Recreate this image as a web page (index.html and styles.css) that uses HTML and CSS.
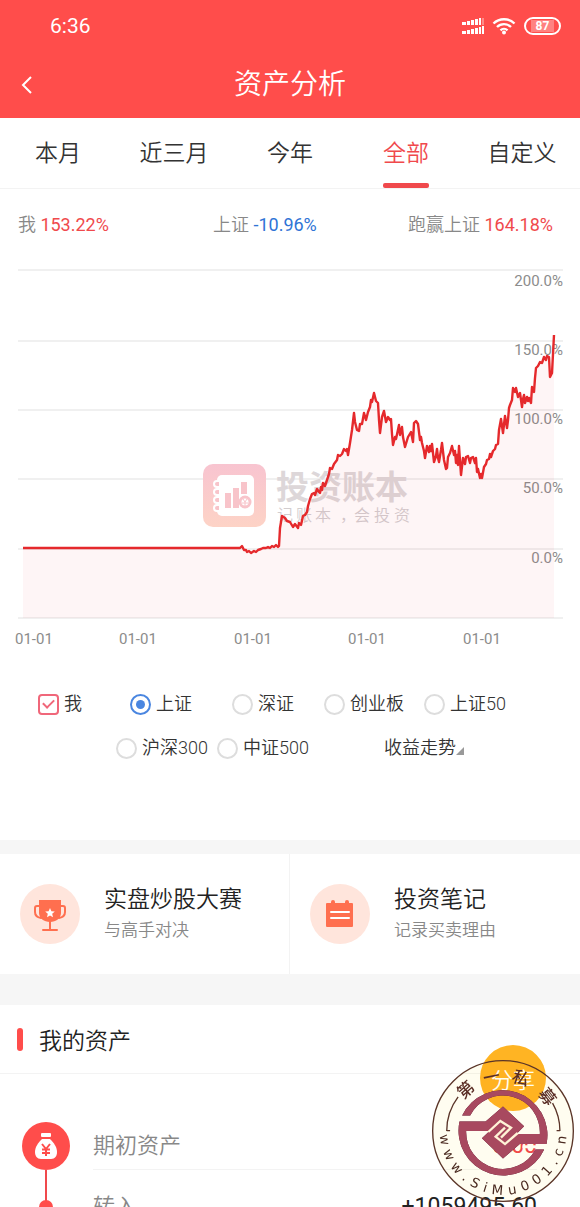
FILE: index.html
```html
<!DOCTYPE html>
<html lang="zh-CN">
<head>
  <meta charset="UTF-8" />
  <meta name="viewport" content="width=device-width, initial-scale=1" />
  <title>资产分析</title>
  <link rel="stylesheet" href="styles.css">
</head>
<body>

<header>
  <div class="status">
    <span class="time">6:36</span>
    <svg class="signal" width="22" height="18" viewBox="0 0 22 18" fill="#fff">
      <path d="M0 5h4v3H0zM5 4h3v4H5zM9 3h3v5H9zM13 2h3v6h-3zM17 1h2v7h-2z" />
      <path d="M20 1h2v7h-2z" opacity=".35" />
      <path d="M0 14h4v3H0zM5 13h3v4H5zM9 12h3v5H9zM13 11h3v6h-3zM17 10h2v7h-2zM20 9h2v8h-2z" />
    </svg>
    <svg class="wifi" width="24" height="18" viewBox="0 0 24 18" fill="none" stroke="#fff" stroke-width="2.4">
      <path d="M1.5 6.5a15 15 0 0 1 21 0M5 10a10 10 0 0 1 14 0M8.5 13.3a5 5 0 0 1 7 0" />
      <circle cx="12" cy="15.5" r="2" fill="#fff" stroke="none" />
    </svg>
    <span class="battery"><b>87</b></span>
  </div>
  <div class="title-bar">
    <button class="back" aria-label="返回">
      <svg width="12" height="18" viewBox="0 0 12 18" fill="none" stroke="#fff" stroke-width="2"><path d="M11 1L3 9l8 8" /></svg>
    </button>
    <h1>资产分析</h1>
  </div>
</header>

<nav class="tabs">
  <a href="#">本月</a>
  <a href="#">近三月</a>
  <a href="#">今年</a>
  <a href="#" class="active">全部</a>
  <a href="#">自定义</a>
</nav>

<main>
  <section class="analysis">
    <div class="stats">
      <p>我 <b class="up">153.22%</b></p>
      <p>上证 <b class="down">-10.96%</b></p>
      <p>跑赢上证 <b class="up">164.18%</b></p>
    </div>

    <svg class="chart" viewBox="0 255 580 405">
      <defs>
        <linearGradient id="logoBg" x1="0" y1="0" x2="0" y2="1">
          <stop offset="0" stop-color="#f8c4d0" />
          <stop offset="1" stop-color="#fdd3c6" />
        </linearGradient>
      </defs>

      <path class="grid" d="M18 270H563M18 341H563M18 410H563M18 479H563M18 549H563M18 618H563" />

      <!-- app logo behind the line -->
      <rect x="203" y="464" width="63" height="63" rx="10" fill="url(#logoBg)" />
      <rect x="217" y="475" width="37" height="41" rx="5" fill="#fff" />
      <path d="M219 481h-2a3 3 0 0 0 0 6h2M219 489h-2a3 3 0 0 0 0 6h2M219 497h-2a3 3 0 0 0 0 6h2M219 505h-2a3 3 0 0 0 0 6h2" fill="#f8c4ca" stroke="#fff" stroke-width="2" />
      <path d="M225 493h6v15h-6zM233 488h6v20h-6zM241 482h6v12h-6z" fill="#f8c4ca" />
      <circle cx="245" cy="502" r="5" fill="#fff" stroke="#f8c4ca" stroke-width="3" />
      <path d="M243 499l2 3 2-3M245 502v4M242 503h6" fill="none" stroke="#f8c4ca" />
      <text class="mark-name" x="276" y="499">投资账本</text>
      <text class="mark-slogan" x="277 296 315 340 354 374 394" y="521">记账本，会投资</text>

      <g class="axis-y">
        <text x="563" y="286">200.0%</text>
        <text x="563" y="355">150.0%</text>
        <text x="563" y="424">100.0%</text>
        <text x="563" y="493">50.0%</text>
        <text x="563" y="563">0.0%</text>
      </g>
      <g class="axis-x">
        <text x="15" y="644">01-01</text>
        <text x="119" y="644">01-01</text>
        <text x="234" y="644">01-01</text>
        <text x="348" y="644">01-01</text>
        <text x="463" y="644">01-01</text>
      </g>

      <path id="area" class="area" />
      <polyline id="line" class="line" points="23,548 240,548 242,546 244,550 246,550 247,552 249,551 251,553 254,551 256,552 258,550 261,549 263,548 266,548 268,547 270,548 272,546 274,547 276,545 278,547 279,546 280,528 282,516 285,518 287,521 290,522 293,527 295,524 298,528 299,523 301,525 303,516 305,515 307,512 308,506 310,499 312,494 314,493 315,495 317,489 319,492 320,493 321,487 322,490 323,483 325,486 327,480 329,474 330,468 332,469 334,464 337,460 338,455 340,456 342,454 344,449 346,451 347,449 348,455 350,443 352,430 354,413 355,422 357,430 359,431 360,424 362,424 364,413 366,420 368,412 370,407 371,400 372,402 374,393 376,401 378,403 379,420 380,433 382,417 384,411 386,422 388,417 390,420 391,419 392,434 393,445 395,437 396,439 399,425 400,435 402,427 403,437 405,447 408,437 411,432 413,442 414,423 416,421 418,424 420,440 421,437 422,443 424,451 425,458 427,446 429,452 430,446 431,451 432,444 434,462 436,456 437,449 438,458 439,462 441,450 442,443 444,460 446,469 447,468 448,457 450,453 452,446 454,455 455,451 456,463 457,455 458,465 459,446 461,475 463,458 465,464 466,457 468,456 470,463 471,458 473,457 475,463 476,458 477,472 478,469 480,478 481,474 482,478 484,467 486,464 487,460 489,459 490,454 491,457 493,451 495,449 496,445 498,444 499,430 501,419 503,433 505,416 507,428 508,420 509,408 510,405 512,400 513,388 515,392 516,388 518,397 520,393 522,407 523,399 524,395 525,403 527,397 528,401 529,398 531,403 532,387 534,392 535,378 536,368 538,366 540,362 542,363 544,357 546,360 547,356 549,357 550,377 552,373 554,335" />
    </svg>

    <form class="legend">
      <div class="legend-row">
        <label><input type="checkbox" checked>我</label>
        <label><input type="radio" name="index" checked>上证</label>
        <label><input type="radio" name="index">深证</label>
        <label><input type="radio" name="index">创业板</label>
        <label><input type="radio" name="index">上证50</label>
      </div>
      <div class="legend-row second">
        <label><input type="radio" name="index">沪深300</label>
        <label><input type="radio" name="index">中证500</label>
        <div class="picker">
          <select aria-label="走势类型">
            <option>收益走势</option>
          </select>
          <svg width="8" height="8" viewBox="0 0 8 8"><path d="M8 0v8H0z" fill="#999" /></svg>
        </div>
      </div>
    </form>
  </section>

  <section class="cards">
    <a href="#" class="card">
      <svg width="60" height="60" viewBox="0 0 60 60">
        <circle cx="30" cy="30" r="30" fill="#ffe5dc" />
        <path d="M19 16h22v13c0 5-5 9-11 9s-11-4-11-9z" fill="#ff6f4f" />
        <path d="M19 22h-2q-2 0-2 2v4q0 5 6 6M41 22h2q2 0 2 2v4q0 5-6 6M30 37v9M23 46h14" fill="none" stroke="#ff6f4f" stroke-width="2" stroke-linecap="round" />
        <path d="M30 24l1.4 3.2 3.4.3-2.6 2.3.8 3.4-3-1.8-3 1.8.8-3.4-2.6-2.3 3.4-.3z" fill="#fff" />
      </svg>
      <div>
        <h3>实盘炒股大赛</h3>
        <p>与高手对决</p>
      </div>
    </a>
    <a href="#" class="card">
      <svg width="60" height="60" viewBox="0 0 60 60">
        <circle cx="30" cy="30" r="30" fill="#ffe5dc" />
        <path d="M17 19h4v-1a2 2 0 0 1 4 0v1h10v-1a2 2 0 0 1 4 0v1h3q1 0 1 1v22q0 1-1 1H17q-1 0-1-1V20q0-1 1-1z" fill="#ff6f4f" />
        <path d="M21 28h18M21 34h18" stroke="#fff" stroke-width="2" stroke-linecap="round" />
      </svg>
      <div>
        <h3>投资笔记</h3>
        <p>记录买卖理由</p>
      </div>
    </a>
  </section>

  <section class="assets">
    <h2>我的资产</h2>
    <ul>
      <li>
        <span class="node">
          <svg width="48" height="48" viewBox="0 0 48 48">
            <circle cx="24" cy="24" r="24" fill="#ff4d4b" />
            <rect x="19" y="11" width="10" height="4" rx="1" fill="#fff" />
            <path d="M20 17h8c4 4 7 8 7 13 0 4-2 7-6 7H19c-4 0-6-3-6-7 0-5 3-9 7-13z" fill="#fff" />
            <path d="M20 22l4 5 4-5M24 27v7M20 27.5h8M20 31h8" fill="none" stroke="#ff4d4b" stroke-width="2" />
          </svg>
        </span>
        <div class="row"><span>期初资产</span><b class="up">0.00</b></div>
      </li>
      <li>
        <span class="node"><i class="dot"></i></span>
        <div class="row"><span>转入</span><b>+1059495.60</b></div>
      </li>
    </ul>
  </section>
</main>

<button class="share">分享</button>

<div class="stamp paper"></div>
<svg class="stamp" viewBox="0 0 424 424">
  <circle cx="212" cy="212" r="210" fill="none" stroke="#5a3428" stroke-width="4" />
  <g transform="translate(2 1)">
    <path d="M42 211A168 168 0 0 1 76 109M380 211A168 168 0 0 0 358 128" fill="none" stroke="#5a3428" stroke-width="4" />
    <path d="M42 210h10M370 210h10" stroke="#5a3428" stroke-width="4" />
    <g class="emblem">
      <path d="M88 165A134 134 0 0 1 340 250H230V220H320A110 110 0 0 0 112 165z" />
      <path d="M80 183H190V211H100A110 110 0 0 0 307 266H333A134 134 0 0 1 80 183z" />
      <path d="M158 183L210 138 273 197 250 220 262 248 210 293 147 233 170 211z" />
    </g>
    <path d="M78 174H150M268 258H342" fill="none" stroke="#fffdf0" stroke-width="9" />
    <path d="M166 214L202 181 234 201 204 231M254 217L216 250 188 228 216 201" fill="none" stroke="#fff3d6" stroke-width="7" />
    <text class="stamp-name" x="92 155 234 313" y="118 72 62 100" rotate="-42 -12 19 52">第一私募</text>
    <text class="stamp-url" x="20 30 52 85 109 148 175 227 269 308 342 369 384 396" y="223 272 317 354 372 391 399 401 392 374 348 315 289 252" rotate="81 66 51 39 28 17 5 -9 -22 -35 -48 -59 -69 -81">www.SiMu001.cn</text>
  </g>
</svg>

<script>
  // close the line down to the bottom of the grid for the tinted area
  const points = document.getElementById('line').getAttribute('points');
  document.getElementById('area').setAttribute('d', `M23 618L${points} 554,618z`);
</script>

</body>
</html>
```
FILE: styles.css
```css
* {
  box-sizing: border-box;
}
body {
  font-family: Roboto, "Noto Sans CJK SC", sans-serif;
  font-weight: 350;
  margin: 0;
  height: 100vh;
  overflow: hidden;
  position: relative;
  background: white;
  color: #222;
}
h1, h2, h3, p, ul {
  margin: 0;
  padding: 0;
  font-weight: 350;
}
a {
  color: inherit;
  text-decoration: none;
}
b {
  font-weight: 400;
}
button {
  font: inherit;
  border: none;
  padding: 0;
  color: white;
  cursor: pointer;
}
.up {
  color: #f0494c;
}
.down {
  color: #2f74d6;
}

header {
  background: #ff4d4b;
  color: white;
}
.status {
  display: flex;
  align-items: center;
  gap: 8px;
  height: 52px;
  padding: 0 19px 0 50px;
}
.time {
  flex: 1;
  font-size: 21px;
  font-weight: 400;
}
.battery {
  display: flex;
  align-items: center;
  justify-content: center;
  width: 37px;
  height: 18px;
  border: 2px solid white;
  border-radius: 9px;
  padding: 2px 5px;
}
.battery b {
  flex: 1;
  text-align: center;
  background: rgba(255,255,255,0.3);
  font-size: 12px;
  line-height: 12px;
  font-weight: 700;
}
.title-bar {
  display: grid;
  grid-template-columns: 50px 1fr 50px;
  align-items: center;
  height: 66px;
}
.title-bar h1 {
  font-size: 28px;
  line-height: 40px;
  text-align: center;
}
.back {
  background: none;
  height: 40px;
  display: flex;
  align-items: center;
  padding-left: 20px;
}

.tabs {
  display: grid;
  grid-template-columns: repeat(5, 1fr);
  justify-items: center;
  height: 71px;
  border-bottom: 1px solid #f3f3f3;
  font-size: 23px;
  line-height: 72px;
  color: #333;
}
.tabs a {
  white-space: nowrap;
  height: 70px;
}
.tabs .active {
  color: #f0494c;
  position: relative;
}
.tabs .active::after {
  content: "";
  position: absolute;
  left: 0;
  right: 0;
  bottom: 0;
  height: 5px;
  border-radius: 2px;
  background: #f0494c;
}

.stats {
  display: flex;
  padding: 22px 27px 0 18px;
  font-size: 18px;
  line-height: 28px;
  color: #888;
}
.stats p {
  flex: 1;
  white-space: nowrap;
}
.stats p:last-child {
  flex: none;
}

.chart {
  display: block;
  width: 100%;
  margin-top: 16px;
  font-size: 15px;
  font-weight: 400;
}
.grid {
  stroke: #f0f0f0;
  stroke-width: 2;
}
.line {
  fill: none;
  stroke: #e5292c;
  stroke-width: 2.4;
  stroke-linejoin: round;
}
.area {
  fill: rgba(240,60,70,0.05);
}
.axis-y, .axis-x {
  fill: #8c8c8c;
}
.axis-y {
  text-anchor: end;
}
.mark-name {
  font-size: 33px;
  font-weight: 700;
  fill: #ddd7d9;
}
.mark-slogan {
  font-size: 16px;
  font-weight: 350;
  fill: #d2cdcf;
}

.legend {
  padding-top: 30px;
  height: 180px;
  font-size: 18px;
  line-height: 28px;
  color: #333;
}
.legend-row {
  display: grid;
  grid-template-columns: 92px 102px 92px 100px auto;
  padding-left: 38px;
  margin-bottom: 16px;
}
.legend-row.second {
  grid-template-columns: 101px 167px auto;
  padding-left: 116px;
}
.legend label {
  display: flex;
  align-items: center;
  gap: 5px;
  white-space: nowrap;
}
.legend input {
  appearance: none;
  width: 21px;
  height: 21px;
  margin: 0;
  border: 2px solid #ddd;
  border-radius: 50%;
  display: grid;
  place-items: center;
}
.legend input[type="radio"]:checked {
  border-color: #4a86e0;
}
.legend input[type="radio"]:checked::after {
  content: "";
  width: 9px;
  height: 9px;
  border-radius: 50%;
  background: #4a86e0;
}
.legend input[type="checkbox"] {
  border-color: #f0677a;
  border-radius: 4px;
}
.legend input[type="checkbox"]:checked::after {
  content: "";
  width: 9px;
  height: 5px;
  border: solid #f0677a;
  border-width: 0 0 2px 2px;
  transform: rotate(-45deg);
  margin-bottom: 3px;
}
.picker {
  display: flex;
  align-items: center;
}
.picker select {
  appearance: none;
  border: none;
  background: none;
  padding: 0;
  font: inherit;
  color: inherit;
}
.picker svg {
  margin-top: 6px;
}

.cards {
  display: grid;
  grid-template-columns: 1fr 1fr;
  border: solid #f6f6f6;
  border-width: 14px 0 31px;
}
.card {
  display: flex;
  align-items: center;
  gap: 24px;
  height: 120px;
  padding-left: 20px;
}
.card:first-child {
  border-right: 1px solid #f3f3f3;
}
.card h3 {
  font-size: 23px;
  line-height: 32px;
}
.card p {
  font-size: 17px;
  line-height: 28px;
  color: #888;
}

.assets h2 {
  display: flex;
  align-items: center;
  gap: 16px;
  height: 69px;
  padding-left: 17px;
  border-bottom: 1px solid #f3f3f3;
  font-size: 23px;
}
.assets h2::before {
  content: "";
  width: 6px;
  height: 23px;
  border-radius: 3px;
  background: #ff4d4b;
}
.assets ul {
  list-style: none;
  padding: 48px 43px 0 22px;
}
.assets li {
  display: flex;
  gap: 23px;
}
.node {
  width: 48px;
  display: flex;
  flex-direction: column;
  align-items: center;
}
.node svg {
  display: block;
}
.node::after {
  content: "";
  flex: 1;
  width: 2px;
  background: #f0494c;
}
.dot {
  width: 14px;
  height: 14px;
  margin-top: 30px;
  border-radius: 50%;
  background: #ff4d4b;
  flex: none;
}
li:last-child .node {
  background: linear-gradient(#f0494c, #f0494c) center top / 2px 32px no-repeat;
}
.row {
  flex: 1;
  display: flex;
  justify-content: space-between;
  height: 48px;
  line-height: 48px;
  font-size: 22px;
  border-bottom: 1px solid #f3f3f3;
}
li:last-child .row {
  height: 74px;
  line-height: 74px;
}
.row span {
  color: #888;
}
.row b {
  font-size: 23px;
}

.share {
  position: fixed;
  right: 34px;
  bottom: 96px;
  width: 66px;
  height: 66px;
  border-radius: 50%;
  background: #ffb423;
  font-size: 22px;
}
.stamp {
  position: fixed;
  right: 6px;
  bottom: 5px;
  width: 142px;
  height: 142px;
}
.paper {
  border-radius: 50%;
  background: #fffdf0;
  mix-blend-mode: multiply;
}
.emblem {
  fill: #a8495f;
  filter: drop-shadow(0 0 2px #4a1528);
}
.stamp-name {
  font-size: 50px;
  font-weight: 500;
  fill: #5a2d25;
}
.stamp-url {
  font-family: "DejaVu Sans", sans-serif;
  font-size: 40px;
  font-weight: 400;
  fill: #4a2a20;
}
```
